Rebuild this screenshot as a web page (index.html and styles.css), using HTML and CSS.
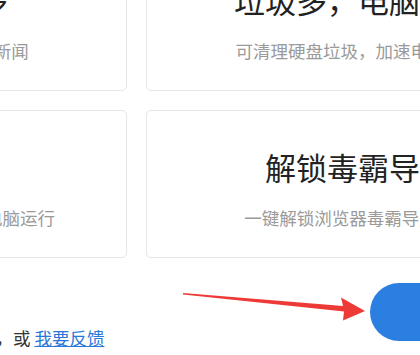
FILE: index.html
```html
<!DOCTYPE html>
<html>
<head>
<meta charset="UTF-8">
<title>电脑修复</title>
<link rel="stylesheet" href="styles.css">
</head>
<body>
<div class="page">
  <div class="grid">
    <div class="card">
      <div class="card-title">弹窗广告太多</div>
      <div class="card-desc">拦截弹窗广告，告别垃圾新闻</div>
    </div>
    <div class="card">
      <div class="card-title">垃圾多，电脑卡顿</div>
      <div class="card-desc">可清理硬盘垃圾，加速电脑运行</div>
    </div>
    <div class="card">
      <div class="card-title">电脑加速</div>
      <div class="card-desc">关闭后台无用的进程，加速电脑运行</div>
    </div>
    <div class="card">
      <div class="card-title">解锁毒霸导航</div>
      <div class="card-desc">一键解锁浏览器毒霸导航劫持</div>
    </div>
  </div>

  <div class="footer">
    <p class="feedback">如有其他问题请联系客服，或 <a href="#">我要反馈</a></p>
    <button class="fix-btn">立即修复</button>
  </div>

  <svg class="arrow" width="420" height="355" viewBox="0 0 420 355">
    <polygon points="183,293 343,306 341,297.5 365,311 343,320.5 344,311.5 183,294.6" fill="#ee3a36"/>
  </svg>
</div>
</body>
</html>
```

FILE: styles.css
```css
body {
  margin: 0;
  width: 420px;
  height: 355px;
  overflow: hidden;
  background: #ffffff;
  font-family: "Noto Sans CJK SC", "Noto Sans", sans-serif;
}
.page {
  position: relative;
  display: flow-root;
  width: 420px;
  height: 355px;
}
.grid {
  display: grid;
  grid-template-columns: 424px 424px;
  gap: 19px;
  margin: -57px 0 0 -297px;
  width: 867px;
}
.card {
  box-sizing: border-box;
  height: 148px;
  border: 1px solid #e6e6e6;
  border-radius: 5px;
  padding-top: 36px;
  text-align: center;
  white-space: nowrap;
}
.card-title {
  font-size: 31px;
  line-height: 40px;
  color: #222222;
}
.card-desc {
  margin-top: 19px;
  font-size: 17.5px;
  line-height: 24px;
  color: #9a9a9a;
}
.footer {
  display: flex;
  align-items: flex-start;
  justify-content: space-between;
  margin-top: 25px;
  margin-right: -160px;
}
.feedback {
  margin: 43px 0 0 -197px;
  font-size: 17.5px;
  line-height: 24px;
  color: #333333;
  white-space: nowrap;
}
.feedback a {
  color: #2a78d8;
  text-decoration: underline;
}
.fix-btn {
  flex-shrink: 0;
  width: 210px;
  height: 58px;
  border: none;
  border-radius: 29px;
  background: #2b7fe0;
  color: #ffffff;
  font-family: inherit;
  font-size: 20px;
  cursor: pointer;
}
.arrow {
  position: absolute;
  left: 0;
  top: 0;
  pointer-events: none;
}
```
